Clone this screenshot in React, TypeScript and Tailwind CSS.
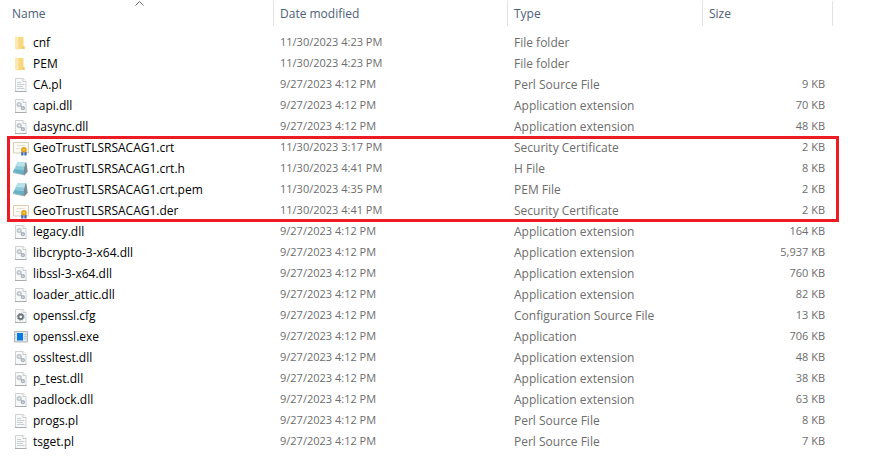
import type { ReactNode } from "react";

type Kind = "folder" | "text" | "dll" | "cert" | "note" | "config" | "exe";

type FileRow = {
  name: string;
  date: string;
  type: string;
  size: string;
  kind: Kind;
};

const before: FileRow[] = [
  { name: "cnf", date: "11/30/2023 4:23 PM", type: "File folder", size: "", kind: "folder" },
  { name: "PEM", date: "11/30/2023 4:23 PM", type: "File folder", size: "", kind: "folder" },
  { name: "CA.pl", date: "9/27/2023 4:12 PM", type: "Perl Source File", size: "9 KB", kind: "text" },
  { name: "capi.dll", date: "9/27/2023 4:12 PM", type: "Application extension", size: "70 KB", kind: "dll" },
  { name: "dasync.dll", date: "9/27/2023 4:12 PM", type: "Application extension", size: "48 KB", kind: "dll" },
];

const highlighted: FileRow[] = [
  { name: "GeoTrustTLSRSACAG1.crt", date: "11/30/2023 3:17 PM", type: "Security Certificate", size: "2 KB", kind: "cert" },
  { name: "GeoTrustTLSRSACAG1.crt.h", date: "11/30/2023 4:41 PM", type: "H File", size: "8 KB", kind: "note" },
  { name: "GeoTrustTLSRSACAG1.crt.pem", date: "11/30/2023 4:35 PM", type: "PEM File", size: "2 KB", kind: "note" },
  { name: "GeoTrustTLSRSACAG1.der", date: "11/30/2023 4:41 PM", type: "Security Certificate", size: "2 KB", kind: "cert" },
];

const after: FileRow[] = [
  { name: "legacy.dll", date: "9/27/2023 4:12 PM", type: "Application extension", size: "164 KB", kind: "dll" },
  { name: "libcrypto-3-x64.dll", date: "9/27/2023 4:12 PM", type: "Application extension", size: "5,937 KB", kind: "dll" },
  { name: "libssl-3-x64.dll", date: "9/27/2023 4:12 PM", type: "Application extension", size: "760 KB", kind: "dll" },
  { name: "loader_attic.dll", date: "9/27/2023 4:12 PM", type: "Application extension", size: "82 KB", kind: "dll" },
  { name: "openssl.cfg", date: "9/27/2023 4:12 PM", type: "Configuration Source File", size: "13 KB", kind: "config" },
  { name: "openssl.exe", date: "9/27/2023 4:12 PM", type: "Application", size: "706 KB", kind: "exe" },
  { name: "ossltest.dll", date: "9/27/2023 4:12 PM", type: "Application extension", size: "48 KB", kind: "dll" },
  { name: "p_test.dll", date: "9/27/2023 4:12 PM", type: "Application extension", size: "38 KB", kind: "dll" },
  { name: "padlock.dll", date: "9/27/2023 4:12 PM", type: "Application extension", size: "63 KB", kind: "dll" },
  { name: "progs.pl", date: "9/27/2023 4:12 PM", type: "Perl Source File", size: "8 KB", kind: "text" },
  { name: "tsget.pl", date: "9/27/2023 4:12 PM", type: "Perl Source File", size: "7 KB", kind: "text" },
];

function Page({ children }: { children: ReactNode }) {
  return (
    <>
      <path d="M2.5 1.5h7.5l3 3v10h-10.5z" fill="#f7f8f8" stroke="#cfd2d4" />
      <path d="M10 1.5v3h3" fill="#fff" stroke="#bcc0c2" strokeWidth="0.8" />
      <path d="M2 14.5h11.5" stroke="#a9adb0" />
      {children}
    </>
  );
}

const drawings: Record<Kind, ReactNode> = {
  folder: (
    <>
      <path d="M4 2h6.5v9h1v3H4z" fill="#f7d982" />
      <path d="M9.5 11h2v3h-2z" fill="#f0cb6c" />
      <path d="M2 1.6h1.6L5.4 3v12L2 13.8z" fill="#fde9b0" />
    </>
  ),
  text: (
    <Page>
      <path d="M4 5.5h4M4 7.5h7.5M4 9.5h6M4 11.5h7.5" stroke="#cdd0d2" />
    </Page>
  ),
  dll: (
    <Page>
      <circle cx="6.2" cy="6.6" r="2.7" fill="#c2c9cf" />
      <circle cx="6.2" cy="6.6" r="0.8" fill="#f2f4f5" />
      <path d="M7.5 8l1.4 1.2" stroke="#b3bcc4" strokeWidth="1.5" />
      <circle cx="9.9" cy="10.2" r="2.1" fill="#a9b3bc" />
      <circle cx="9.9" cy="10.2" r="0.7" fill="#e6eaed" />
    </Page>
  ),
  config: (
    <Page>
      <circle cx="7.7" cy="8.8" r="2.3" fill="none" stroke="#68757d" strokeWidth="1.8" />
      <circle cx="7.7" cy="8.8" r="3.5" fill="none" stroke="#77838b" strokeWidth="0.9" strokeDasharray="1.4 1.35" />
    </Page>
  ),
  cert: (
    <>
      <path d="M0.5 2.5h15v10.5h-15z" fill="#fdfaf4" stroke="#dccdb6" />
      <path d="M4 5.5h8M3 8.5h4" stroke="#dedad3" strokeWidth="0.8" />
      <path d="M8.2 11.5h2.3v4H8.2zM11.3 11.5h2.3v4h-2.3z" fill="#3d6fc0" />
      <circle cx="10.9" cy="9.8" r="2.8" fill="#dfa31a" />
      <circle cx="10.9" cy="9.8" r="1.2" fill="#f0c23c" />
    </>
  ),
  note: (
    <>
      <path d="M12 1l1.5 1 1.2 8.8-3 3.4-2.5-1z" fill="#7b8c94" />
      <path d="M0 11.6l9.6 2 2 .4" fill="none" stroke="#a9b6bb" />
      <path d="M4.6 1l7.8.4-2.6 12L0 11z" fill="#8ccbd9" />
      <path d="M4.6 1l7.8.4-.9 4-8.8-.4z" fill="#b9e1e9" />
      <path d="M1.3 8.3l9.5 1-.9 4.1L0 11z" fill="#67b1c5" />
    </>
  ),
  exe: (
    <>
      <path d="M1.5 2.5h13v10.5h-13z" fill="#e3e5e7" stroke="#b4b7b9" />
      <path d="M4 4h6v7.5H4z" fill="#087be0" />
      <path d="M11 5.5h3M11 7.5h3M11 9.5h3M2 5.5h1M2 7.5h1M2 9.5h1" stroke="#b5c6d4" strokeWidth="0.8" />
    </>
  ),
};

function FileIcon({ kind }: { kind: Kind }) {
  return (
    <svg viewBox="0 0 16 16" className="size-4 shrink-0" aria-hidden="true">
      {drawings[kind]}
    </svg>
  );
}

function Row({ file, children }: { file: FileRow; children?: ReactNode }) {
  return (
    <tr className="h-[21px]">
      <td className="p-0 pl-[13px] text-black">
        <div className="flex items-center gap-1">
          <FileIcon kind={file.kind} />
          <span>{file.name}</span>
        </div>
        {children}
      </td>
      <td className="p-0 pl-1.5 text-[11px]">{file.date}</td>
      <td className="p-0 pl-1.5">{file.type}</td>
      <td className="p-0 pr-2 text-right text-[11px]">{file.size}</td>
    </tr>
  );
}

const headCell = "h-[25px] border-r border-[#e2e2e2] p-0 text-left font-normal";

export default function App() {
  return (
    <main className="min-w-[760px] bg-white pt-px pr-[38px] pb-4 font-['Open_Sans','Noto_Sans',sans-serif] text-xs text-[#6d6d6d]">
      <table className="w-full table-fixed border-separate border-spacing-0 whitespace-nowrap">
        <colgroup>
          <col />
          <col className="w-[234px]" />
          <col className="w-[195px]" />
          <col className="w-[130px]" />
        </colgroup>
        <thead className="text-[#4c607a]">
          <tr>
            <th scope="col" aria-sort="ascending" className={`relative pl-3! ${headCell}`}>
              <button type="button">Name</button>
              <svg viewBox="0 0 9 5" className="absolute top-0 left-1/2 h-[5px] w-[9px] -translate-x-0.5" fill="none" aria-hidden="true">
                <path d="M0.5 4.5l4-4 4 4" stroke="#6b6b6b" />
              </svg>
            </th>
            <th scope="col" className={`pl-1.5! ${headCell}`}>
              <button type="button">Date modified</button>
            </th>
            <th scope="col" className={`pl-1.5! ${headCell}`}>
              <button type="button">Type</button>
            </th>
            <th scope="col" className={`pl-1.5! ${headCell}`}>
              <button type="button">Size</button>
            </th>
          </tr>
        </thead>
        <tbody>
          <tr className="h-1.5">
            <td colSpan={4} className="p-0" />
          </tr>
          {before.map((file) => (
            <Row key={file.name} file={file} />
          ))}
        </tbody>
        <tbody className="relative">
          {highlighted.map((file, i) => (
            <Row key={file.name} file={file}>
              {i === 0 && (
                <div className="pointer-events-none absolute -top-px -right-1.5 -bottom-px left-[7px] border-3 border-[#ed1c24]" />
              )}
            </Row>
          ))}
        </tbody>
        <tbody>
          {after.map((file) => (
            <Row key={file.name} file={file} />
          ))}
        </tbody>
      </table>
    </main>
  );
}
